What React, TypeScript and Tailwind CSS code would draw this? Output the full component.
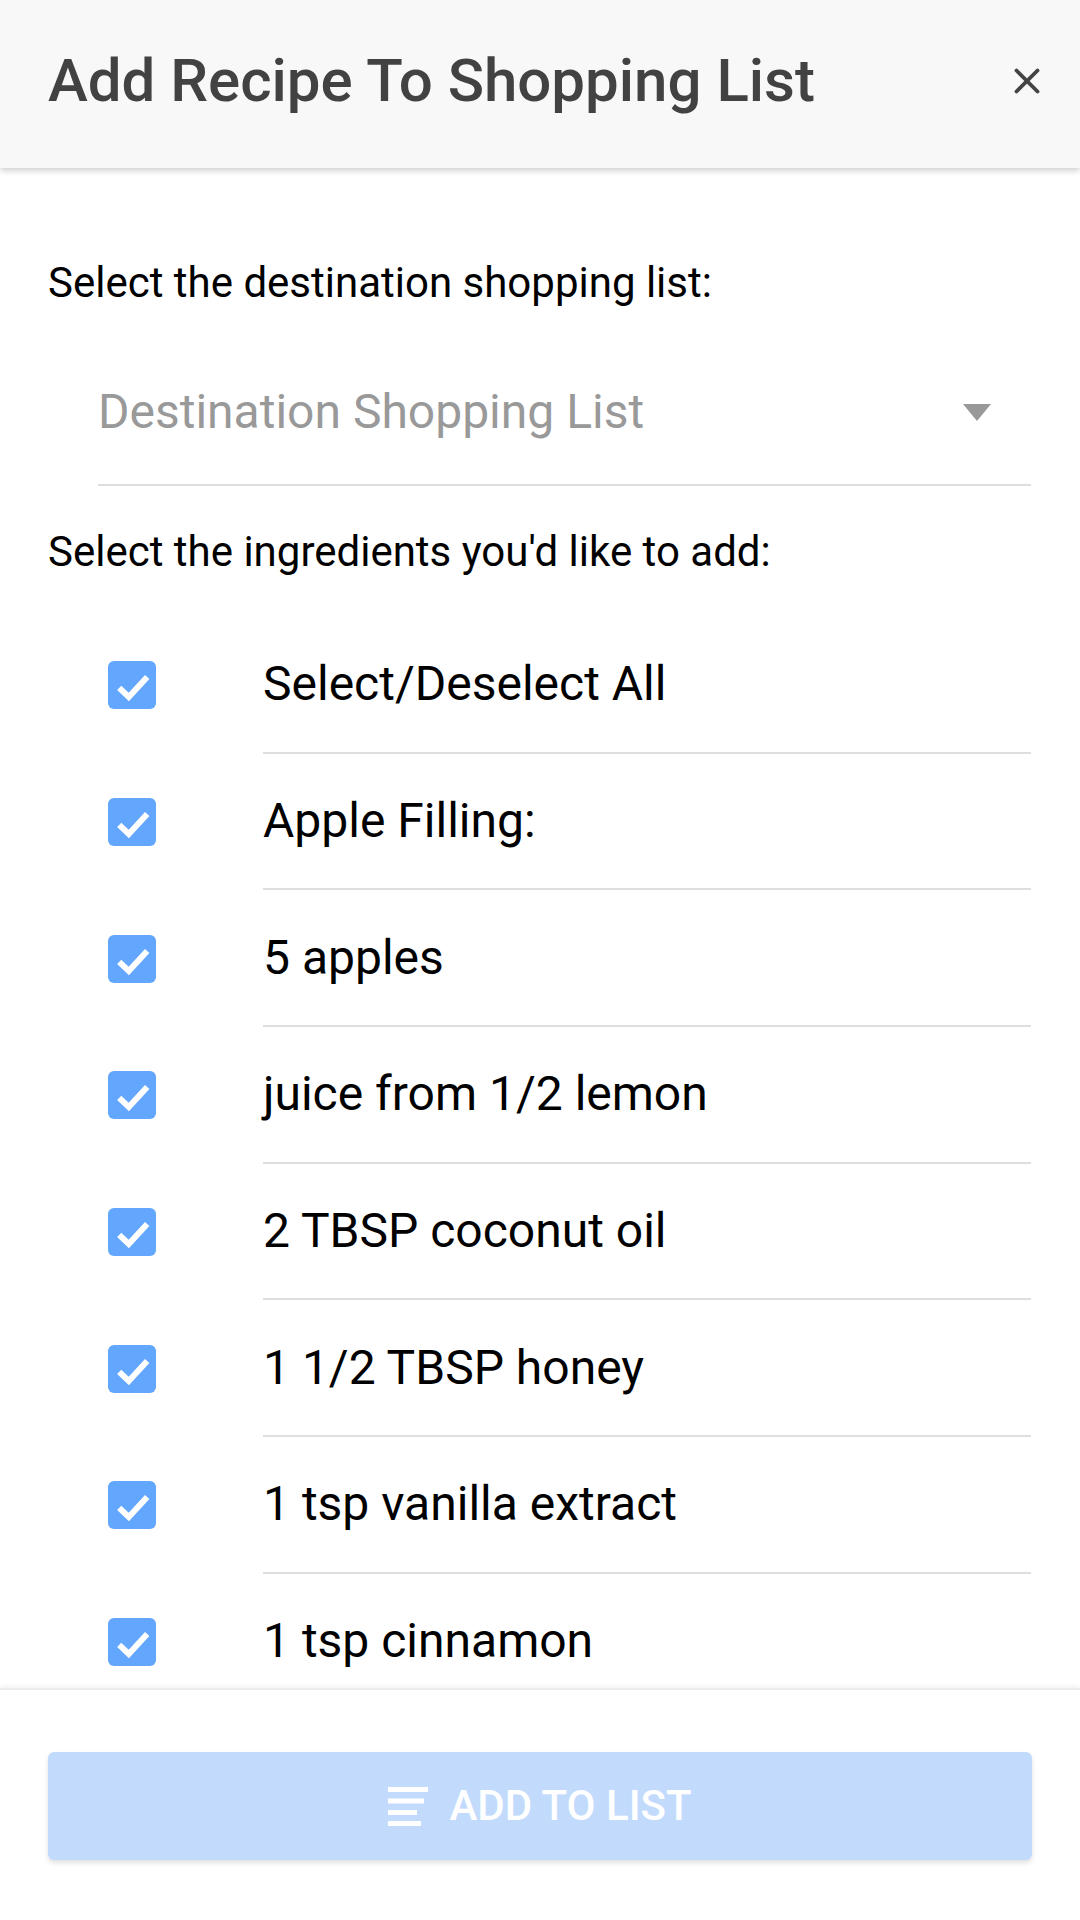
import { X } from 'lucide-react';

const items = [
  'Select/Deselect All',
  'Apple Filling:',
  '5 apples',
  'juice from 1/2 lemon',
  '2 TBSP coconut oil',
  '1 1/2 TBSP honey',
  '1 tsp vanilla extract',
  '1 tsp cinnamon',
];

function CheckBox() {
  return (
    <div className="w-[48px] h-[48px] rounded-[6px] bg-[#62a6fd] flex items-center justify-center">
      <svg width="48" height="48" viewBox="0 0 24 24">
        <polyline points="5.6,13.4 10.4,18 19.6,8" fill="none" stroke="#fff" strokeWidth="3" />
      </svg>
    </div>
  );
}

function ListIcon() {
  return (
    <svg width="40" height="40" viewBox="0 0 40 40" className="shrink-0">
      <rect x="0" y="1" width="40" height="5" fill="#fff" />
      <rect x="0" y="12.5" width="36" height="5" fill="#fff" />
      <rect x="0" y="24" width="29" height="5" fill="#fff" />
      <rect x="0" y="35" width="33" height="5" fill="#fff" />
    </svg>
  );
}

export default function App() {
  return (
    <div className="w-[1080px] h-[1920px] flex flex-col bg-white font-['Roboto',sans-serif] overflow-hidden">
      <div className="relative z-10 h-[168px] shrink-0 bg-[#f8f8f8] shadow-[0_3px_6px_rgba(0,0,0,0.18)] flex items-center justify-between pl-[48px] pr-[32px] pb-[6px]">
        <h1 className="text-[60px] leading-none font-medium text-[#424242]">Add Recipe To Shopping List</h1>
        <X size={42} strokeWidth={2.2} className="text-[#444]" />
      </div>

      <div className="flex-1 overflow-hidden pl-[48px] pr-[49px]">
        <div className="mt-[85px] h-[60px] flex items-center text-[42px] leading-none text-black">
          Select the destination shopping list:
        </div>

        <div className="mt-[27px] ml-[50px] h-[146px] border-b-2 border-[#dedede] flex items-center justify-between pr-[40px]">
          <span className="text-[48px] leading-none text-[#999]">Destination Shopping List</span>
          <svg width="28" height="17" viewBox="0 0 28 17">
            <polygon points="0,0 28,0 14,17" fill="#999" />
          </svg>
        </div>

        <div className="mt-[36px] h-[60px] flex items-center text-[42px] leading-none text-black">
          Select the ingredients you'd like to add:
        </div>

        <div className="mt-[35px]">
          {items.map((item) => (
            <div key={item} className="h-[136.7px] flex">
              <div className="w-[215px] shrink-0 flex items-center pl-[60px]">
                <CheckBox />
              </div>
              <div className="flex-1 border-b-2 border-[#dedede] flex items-center text-[48px] leading-none text-black">
                {item}
              </div>
            </div>
          ))}
        </div>
      </div>

      <div className="relative z-10 h-[232px] shrink-0 bg-white border-t-2 border-[#ececec] shadow-[0_-2px_4px_rgba(0,0,0,0.05)] px-[48px] pt-[62px]">
        <button className="w-full h-[108px] rounded-[6px] bg-[#c2dbfd] shadow-[0_3px_5px_rgba(0,0,0,0.12)] flex items-center justify-center gap-[21px]">
          <ListIcon />
          <span className="text-[42px] leading-none font-medium text-white">ADD TO LIST</span>
        </button>
      </div>
    </div>
  );
}
